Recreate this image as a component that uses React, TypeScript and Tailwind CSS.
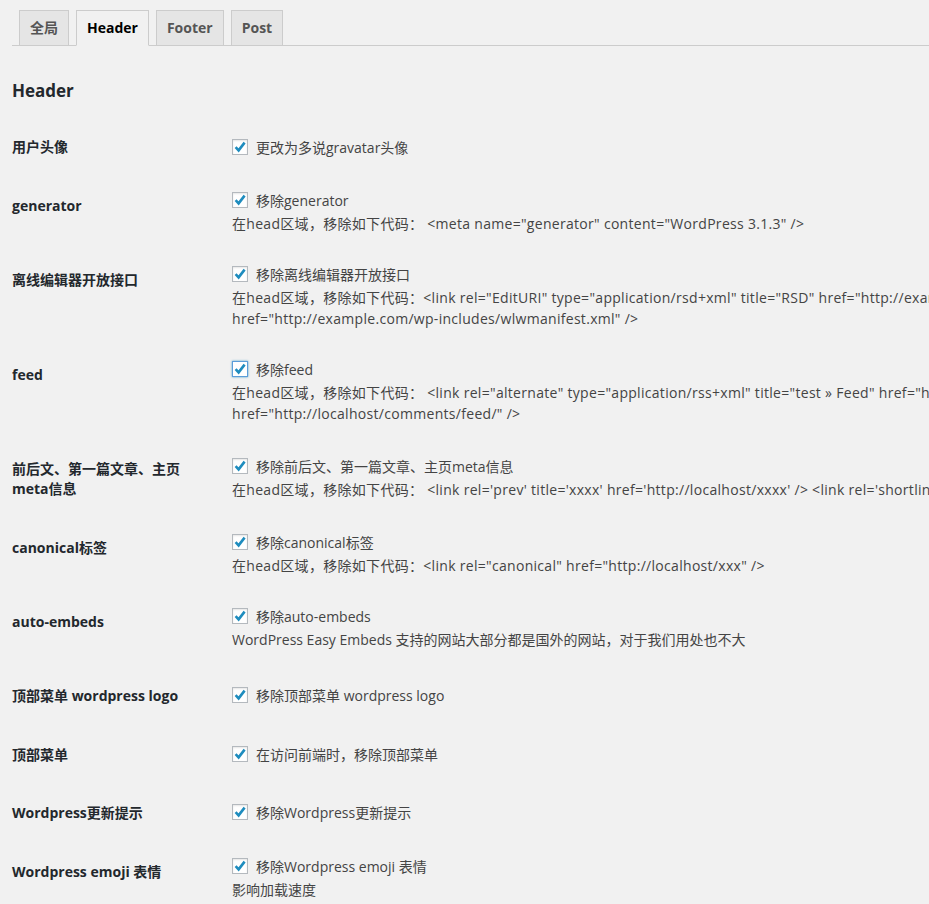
import React from "react";

type Row = {
  label: string[];
  option: string;
  desc?: string[];
  code?: boolean; // code snippets render a bit wider
  mt: string; // gap above row
  pt: string; // label offset
  focus?: boolean;
};

const ROWS: Row[] = [
  { label: ["用户头像"], option: "更改为多说gravatar头像", mt: "mt-[34px]", pt: "pt-0" },
  {
    label: ["generator"],
    option: "移除generator",
    desc: ['在head区域，移除如下代码： <meta name="generator" content="WordPress 3.1.3" />'],
    code: true,
    mt: "mt-[33px]",
    pt: "pt-[6px]",
  },
  {
    label: ["离线编辑器开放接口"],
    option: "移除离线编辑器开放接口",
    desc: [
      '在head区域，移除如下代码：<link rel="EditURI" type="application/rsd+xml" title="RSD" href="http://example.com/xmlrpc.php?rsd" /> <link rel="wlwmanifest" type="application/wlwmanifest+xml"',
      'href="http://example.com/wp-includes/wlwmanifest.xml" />',
    ],
    code: true,
    mt: "mt-[30px]",
    pt: "pt-[6px]",
  },
  {
    label: ["feed"],
    option: "移除feed",
    desc: [
      '在head区域，移除如下代码： <link rel="alternate" type="application/rss+xml" title="test » Feed" href="http://localhost/feed/" /> <link rel="alternate" type="application/rss+xml"',
      'href="http://localhost/comments/feed/" />',
    ],
    code: true,
    mt: "mt-[30px]",
    pt: "pt-[6px]",
    focus: true,
  },
  {
    label: ["前后文、第一篇文章、主页", "meta信息"],
    option: "移除前后文、第一篇文章、主页meta信息",
    desc: [
      "在head区域，移除如下代码： <link rel='prev' title='xxxx' href='http://localhost/xxxx' /> <link rel='shortlink' href='http://localhost/?p=1' />",
    ],
    code: true,
    mt: "mt-[32px]",
    pt: "pt-[3px]",
  },
  {
    label: ["canonical标签"],
    option: "移除canonical标签",
    desc: ['在head区域，移除如下代码：<link rel="canonical" href="http://localhost/xxx" />'],
    code: true,
    mt: "mt-[32px]",
    pt: "pt-[6px]",
  },
  {
    label: ["auto-embeds"],
    option: "移除auto-embeds",
    desc: ["WordPress Easy Embeds 支持的网站大部分都是国外的网站，对于我们用处也不大"],
    mt: "mt-[30px]",
    pt: "pt-[6px]",
  },
  { label: ["顶部菜单 wordpress logo"], option: "移除顶部菜单 wordpress logo", mt: "mt-[35px]", pt: "pt-px" },
  { label: ["顶部菜单"], option: "在访问前端时，移除顶部菜单", mt: "mt-[38px]", pt: "pt-px" },
  { label: ["Wordpress更新提示"], option: "移除Wordpress更新提示", mt: "mt-[37px]", pt: "pt-px" },
  {
    label: ["Wordpress emoji 表情"],
    option: "移除Wordpress emoji 表情",
    desc: ["影响加载速度"],
    mt: "mt-[33px]",
    pt: "pt-[6px]",
  },
];

const TABS = ["全局", "Header", "Footer", "Post"];

function Checkbox({ focus }: { focus?: boolean }) {
  return (
    <span
      className={
        "flex h-4 w-4 shrink-0 items-center justify-center bg-white " +
        (focus
          ? "border border-[#5b9dd9] shadow-[0_0_2px_rgba(30,140,190,0.8)]"
          : "border border-[#b4b9be] shadow-[inset_0_1px_2px_rgba(0,0,0,0.1)]")
      }
    >
      <svg width="14" height="14" viewBox="0 0 14 14">
        <path d="M2.6 7.2 L5.6 10.4 L11.6 2.6" fill="none" stroke="#1e8cbe" strokeWidth="2.6" />
      </svg>
    </span>
  );
}

export default function App() {
  return (
    <div className="min-h-[904px] w-full overflow-hidden bg-[#f1f1f1] font-['Open_Sans','Noto_Sans_CJK_SC',sans-serif] text-[14px] text-[#444]">
      {/* Tabs */}
      <div className="ml-3 flex border-b border-[#ccc] pt-[10px]">
        {TABS.map((t) => (
          <div
            key={t}
            className={
              "ml-[7px] -mb-px h-[36px] border border-[#ccc] px-[10px] text-[14px] font-bold leading-[33px] " +
              (t === "Header"
                ? "border-b-[#f1f1f1] bg-[#f1f1f1] text-black"
                : "bg-[#e5e5e5] text-[#555]")
            }
          >
            {t}
          </div>
        ))}
      </div>

      <h2 className="ml-3 mt-[33px] text-[17px] font-bold leading-[24px] text-[#23282d]">Header</h2>

      {/* Options */}
      <div className="ml-3">
        {ROWS.map((r, i) => (
          <div key={i} className={"flex " + r.mt}>
            <div className={"w-[220px] shrink-0 text-[14px] font-bold leading-[20px] text-[#23282d] " + r.pt}>
              {r.label.map((l) => (
                <div key={l}>{l}</div>
              ))}
            </div>
            <div className="min-w-0 flex-1">
              <div className="flex h-5 items-center gap-2 whitespace-nowrap">
                <Checkbox focus={r.focus} />
                <span>{r.option}</span>
              </div>
              {r.desc && (
                <div className={"mt-[3px] leading-[21px] " + (r.code ? "tracking-[0.3px]" : "")}>
                  {r.desc.map((d) => (
                    <div key={d} className="whitespace-nowrap">
                      {d}
                    </div>
                  ))}
                </div>
              )}
            </div>
          </div>
        ))}
      </div>
    </div>
  );
}
